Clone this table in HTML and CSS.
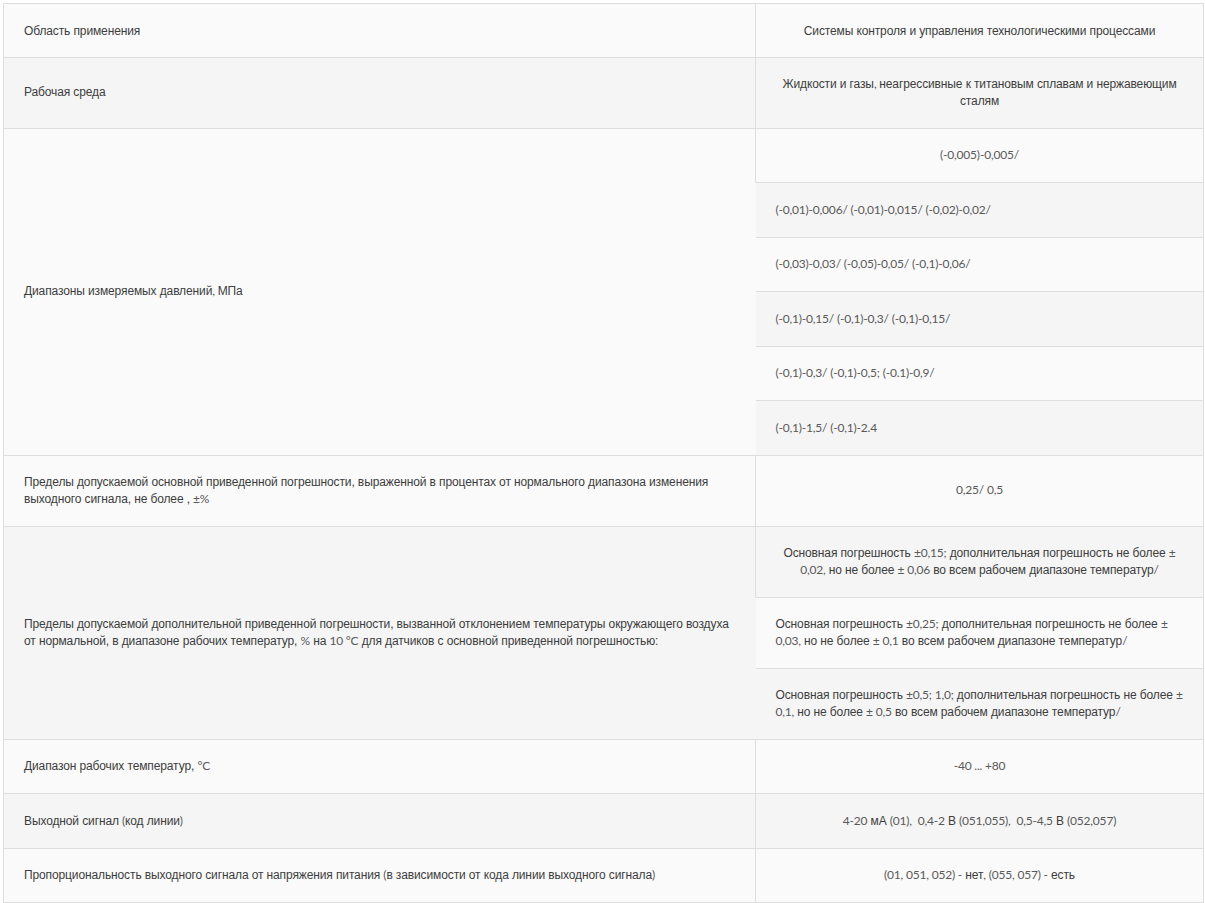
FILE: index.html
```html
<!DOCTYPE html>
<html lang="ru">
<head>
    <meta charset="UTF-8">
    <meta name="viewport" content="width=device-width, initial-scale=1.0">
    <title>Технические характеристики</title>
    <link rel="stylesheet" href="styles.css">
</head>
<body>
    <div class="specs-wrap">
        <table class="specs">
            <colgroup>
                <col class="col-name">
                <col>
            </colgroup>
            <tr>
                <td>Область применения</td>
                <td class="val">Системы контроля и управления технологическими процессами</td>
            </tr>
            <tr>
                <td>Рабочая среда</td>
                <td class="val">Жидкости и газы<span class="num">, </span>неагрессивные к титановым сплавам и нержавеющим сталям</td>
            </tr>
            <tr>
                <td rowspan="6">Диапазоны измеряемых давлений<span class="num">, </span>МПа</td>
                <td class="val"><span class="num">(-0,005)-0,005/</span></td>
            </tr>
            <tr><td class="sub"><span class="num">(-0,01)-0,006/ (-0,01)-0,015/ (-0,02)-0,02/</span></td></tr>
            <tr><td class="sub"><span class="num">(-0,03)-0,03/ (-0,05)-0,05/ (-0,1)-0,06/</span></td></tr>
            <tr><td class="sub"><span class="num">(-0,1)-0,15/ (-0,1)-0,3/ (-0,1)-0,15/</span></td></tr>
            <tr><td class="sub"><span class="num">(-0,1)-0,3/ (-0,1)-0,5; (-0.1)-0,9/</span></td></tr>
            <tr><td class="sub"><span class="num">(-0,1)-1,5/ (-0,1)-2.4</span></td></tr>
            <tr>
                <td>Пределы допускаемой основной приведенной погрешности, выраженной в процентах от нормального диапазона изменения выходного сигнала, не более , <span class="num">±%</span></td>
                <td class="val"><span class="num">0,25/ 0,5</span></td>
            </tr>
            <tr>
                <td rowspan="3">Пределы допускаемой дополнительной приведенной погрешности, вызванной отклонением температуры окружающего воздуха от нормальной, в диапазоне рабочих температур, <span class="num">%</span> на <span class="num">10 °C</span> для датчиков с основной приведенной погрешностью:</td>
                <td class="val">Основная погрешность <span class="num">±0,15;</span> дополнительная погрешность не более <span class="num">± 0,02,</span> но не более <span class="num">± 0,06</span> во всем рабочем диапазоне температур<span class="num">/</span></td>
            </tr>
            <tr><td class="sub">Основная погрешность <span class="num">±0,25;</span> дополнительная погрешность не более <span class="num">± 0,03,</span> но не более <span class="num">± 0,1</span> во всем рабочем диапазоне температур<span class="num">/</span></td></tr>
            <tr><td class="sub">Основная погрешность <span class="num">±0,5; 1,0;</span> дополнительная погрешность не более <span class="num">± 0,1,</span> но не более <span class="num">± 0,5</span> во всем рабочем диапазоне температур<span class="num">/</span></td></tr>
            <tr>
                <td>Диапазон рабочих температур, <span class="num">°C</span></td>
                <td class="val"><span class="num">-40 ... +80</span></td>
            </tr>
            <tr>
                <td>Выходной сигнал <span class="num">(</span>код линии<span class="num">)</span></td>
                <td class="val"><span class="num">4-20</span> мА <span class="num">(01), &nbsp;0,4-2</span> В <span class="num">(051,055), &nbsp;0,5-4,5</span> В <span class="num">(052,057)</span></td>
            </tr>
            <tr>
                <td>Пропорциональность выходного сигнала от напряжения питания <span class="num">(</span>в зависимости от кода линии выходного сигнала<span class="num">)</span></td>
                <td class="val"><span class="num">(01, 051, 052) -</span> нет<span class="num">, (055, 057) -</span> есть</td>
            </tr>
        </table>
    </div>
</body>
</html>
```

FILE: styles.css
```css
body {
    margin: 0;
    padding: 0;
    background-color: #fff;
    font-family: "Liberation Sans", Arial, sans-serif;
    font-size: 12px;
    letter-spacing: -0.12px;
    color: #3d3d3d;
}
.specs-wrap {
    padding: 3px 1px 0 3px;
}
.specs {
    width: 100%;
    border-collapse: collapse;
    table-layout: fixed;
    border: 1px solid #dedede;
}
.col-name {
    width: 752px;
}
.specs td {
    padding: 18.5px 20px;
    line-height: 16.5px;
    vertical-align: middle;
    border-bottom: 1px solid #dedede;
    background-color: #fafafa;
    text-align: left;
}
.specs tr:first-child td {
    padding-bottom: 17.5px;
}
.specs tr:nth-child(even) td {
    background-color: #f5f5f5;
}
.specs td.val {
    text-align: center;
    border-left: 1px solid #dedede;
}
.specs td.sub {
    text-align: left;
}
.num {
    font-family: Lato, "Liberation Sans", sans-serif;
    letter-spacing: -0.2px;
    color: #595959;
}
```
